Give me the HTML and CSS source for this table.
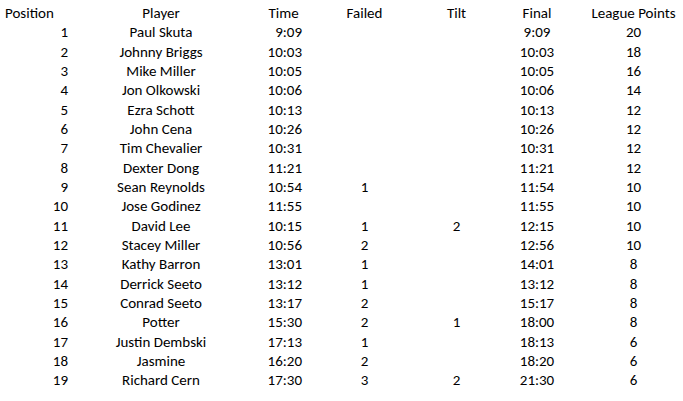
FILE: index.html
```html
<!DOCTYPE html>
<html>
<head>
<meta charset="utf-8">
<link rel="stylesheet" href="styles.css">
</head>
<body>
<div class="sheet">
  <div class="c pos-h">Position</div><div class="c ctr">Player</div><div class="c ctr">Time</div><div class="c ctr">Failed</div><div class="c ctr">Tilt</div><div class="c ctr">Final</div><div class="c pts">League Points</div>

  <div class="c pos">1</div><div class="c ctr">Paul Skuta</div><div class="c time">9:09</div><div class="c ctr"></div><div class="c ctr"></div><div class="c ctr">9:09</div><div class="c pts">20</div>
  <div class="c pos">2</div><div class="c ctr">Johnny Briggs</div><div class="c time">10:03</div><div class="c ctr"></div><div class="c ctr"></div><div class="c ctr">10:03</div><div class="c pts">18</div>
  <div class="c pos">3</div><div class="c ctr">Mike Miller</div><div class="c time">10:05</div><div class="c ctr"></div><div class="c ctr"></div><div class="c ctr">10:05</div><div class="c pts">16</div>
  <div class="c pos">4</div><div class="c ctr">Jon Olkowski</div><div class="c time">10:06</div><div class="c ctr"></div><div class="c ctr"></div><div class="c ctr">10:06</div><div class="c pts">14</div>
  <div class="c pos">5</div><div class="c ctr">Ezra Schott</div><div class="c time">10:13</div><div class="c ctr"></div><div class="c ctr"></div><div class="c ctr">10:13</div><div class="c pts">12</div>
  <div class="c pos">6</div><div class="c ctr">John Cena</div><div class="c time">10:26</div><div class="c ctr"></div><div class="c ctr"></div><div class="c ctr">10:26</div><div class="c pts">12</div>
  <div class="c pos">7</div><div class="c ctr">Tim Chevalier</div><div class="c time">10:31</div><div class="c ctr"></div><div class="c ctr"></div><div class="c ctr">10:31</div><div class="c pts">12</div>
  <div class="c pos">8</div><div class="c ctr">Dexter Dong</div><div class="c time">11:21</div><div class="c ctr"></div><div class="c ctr"></div><div class="c ctr">11:21</div><div class="c pts">12</div>
  <div class="c pos">9</div><div class="c ctr">Sean Reynolds</div><div class="c time">10:54</div><div class="c ctr">1</div><div class="c ctr"></div><div class="c ctr">11:54</div><div class="c pts">10</div>
  <div class="c pos">10</div><div class="c ctr">Jose Godinez</div><div class="c time">11:55</div><div class="c ctr"></div><div class="c ctr"></div><div class="c ctr">11:55</div><div class="c pts">10</div>
  <div class="c pos">11</div><div class="c ctr">David Lee</div><div class="c time">10:15</div><div class="c ctr">1</div><div class="c ctr">2</div><div class="c ctr">12:15</div><div class="c pts">10</div>
  <div class="c pos">12</div><div class="c ctr">Stacey Miller</div><div class="c time">10:56</div><div class="c ctr">2</div><div class="c ctr"></div><div class="c ctr">12:56</div><div class="c pts">10</div>
  <div class="c pos">13</div><div class="c ctr">Kathy Barron</div><div class="c time">13:01</div><div class="c ctr">1</div><div class="c ctr"></div><div class="c ctr">14:01</div><div class="c pts">8</div>
  <div class="c pos">14</div><div class="c ctr">Derrick Seeto</div><div class="c time">13:12</div><div class="c ctr">1</div><div class="c ctr"></div><div class="c ctr">13:12</div><div class="c pts">8</div>
  <div class="c pos">15</div><div class="c ctr">Conrad Seeto</div><div class="c time">13:17</div><div class="c ctr">2</div><div class="c ctr"></div><div class="c ctr">15:17</div><div class="c pts">8</div>
  <div class="c pos">16</div><div class="c ctr">Potter</div><div class="c time">15:30</div><div class="c ctr">2</div><div class="c ctr">1</div><div class="c ctr">18:00</div><div class="c pts">8</div>
  <div class="c pos">17</div><div class="c ctr">Justin Dembski</div><div class="c time">17:13</div><div class="c ctr">1</div><div class="c ctr"></div><div class="c ctr">18:13</div><div class="c pts">6</div>
  <div class="c pos">18</div><div class="c ctr">Jasmine</div><div class="c time">16:20</div><div class="c ctr">2</div><div class="c ctr"></div><div class="c ctr">18:20</div><div class="c pts">6</div>
  <div class="c pos">19</div><div class="c ctr">Richard Cern</div><div class="c time">17:30</div><div class="c ctr">3</div><div class="c ctr">2</div><div class="c ctr">21:30</div><div class="c pts">6</div>
</div>
</body>
</html>
```

FILE: styles.css
```css
html, body {
  margin: 0;
  padding: 0;
  background: #ffffff;
}
body {
  font-family: Carlito, Lato, "Liberation Sans", sans-serif;
  font-size: 15px;
  color: #000000;
}
.sheet {
  display: grid;
  grid-template-columns: 70px 182px 63px 99px 85px 76px 108px;
  grid-auto-rows: 19.333px;
  padding-top: 4px;
  width: 683px;
}
.c {
  line-height: 19.333px;
  white-space: nowrap;
}
.ctr { text-align: center; }
.pos-h { text-align: left; padding-left: 5px; }
.pos { text-align: right; padding-right: 2px; }
.time { text-align: right; padding-right: 13px; }
.pts { text-align: center; padding-left: 9px; }
```
